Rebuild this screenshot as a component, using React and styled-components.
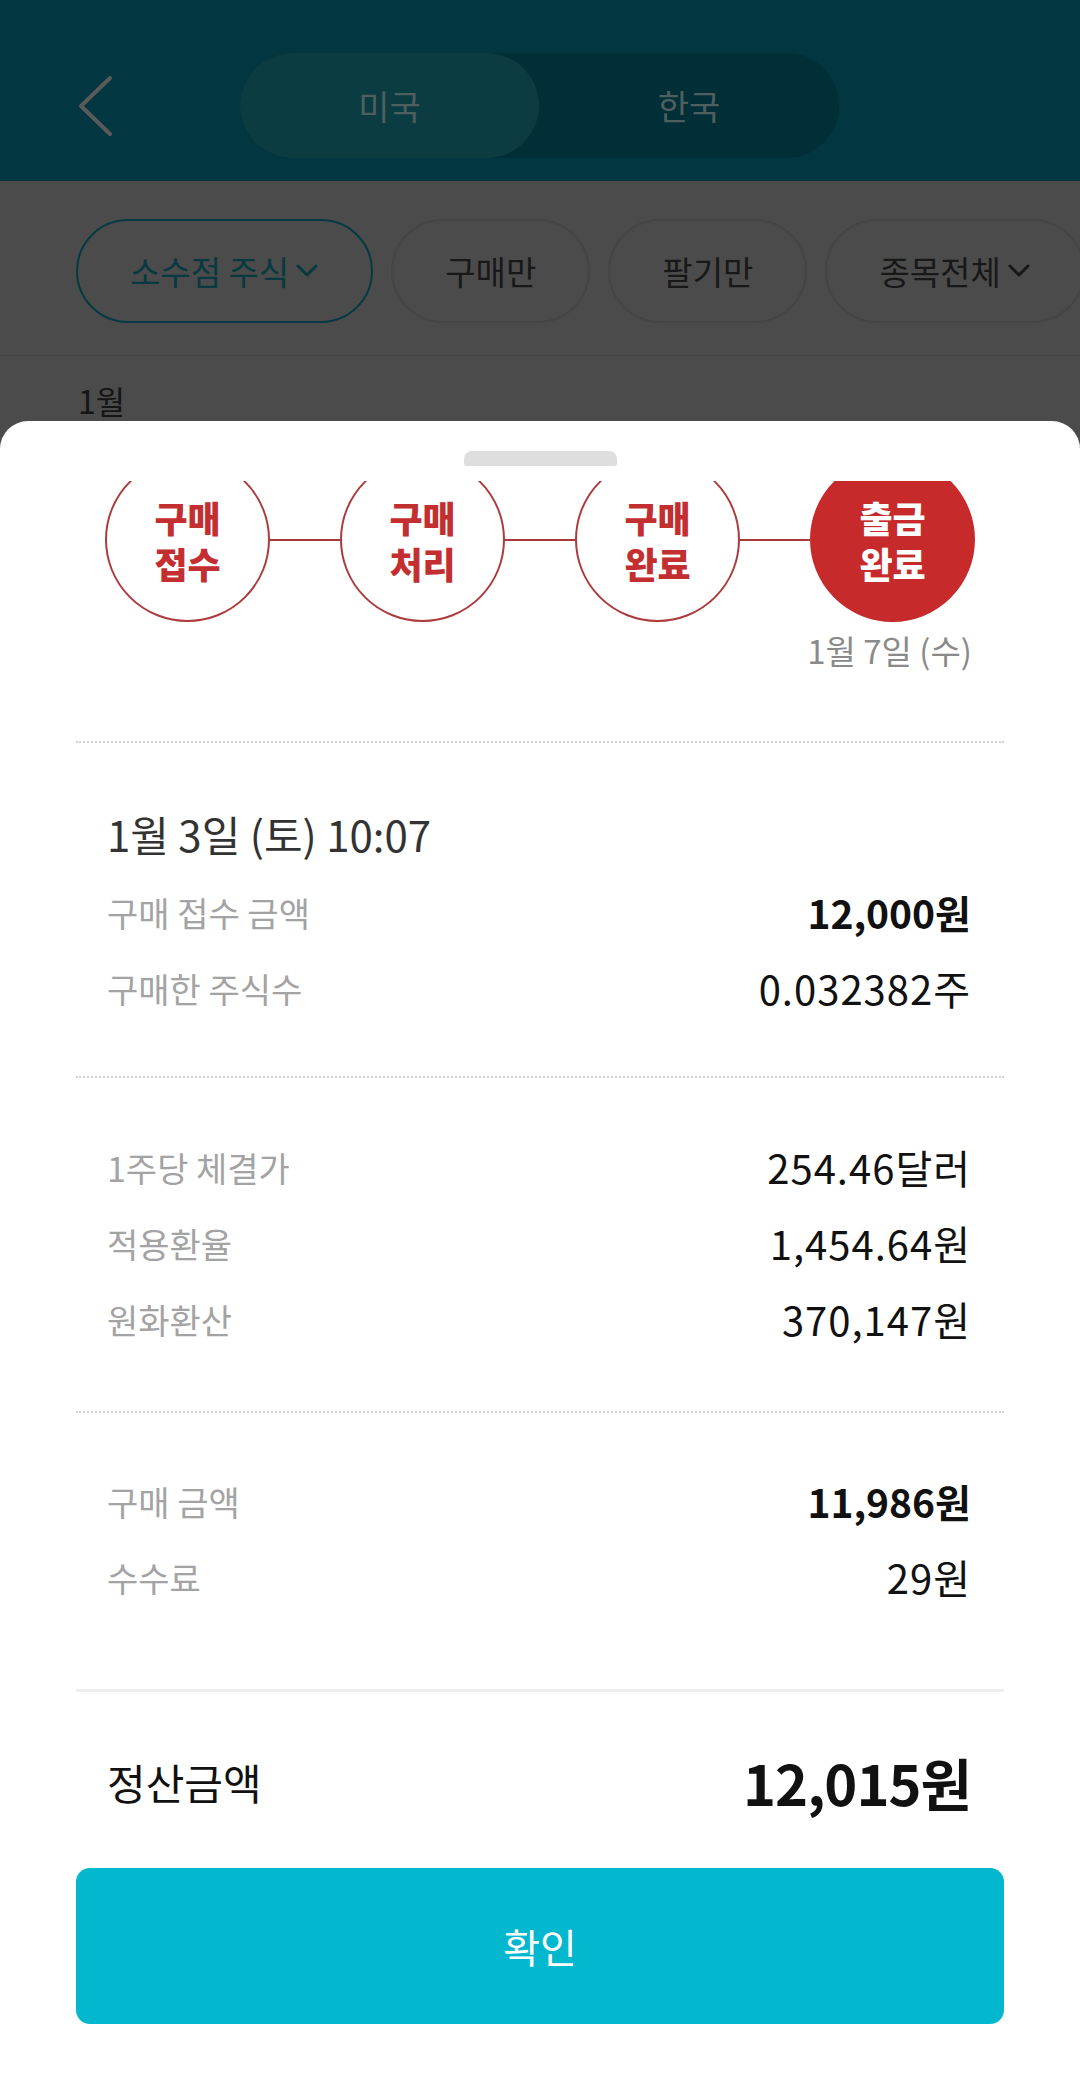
import React from 'react'
import styled, { createGlobalStyle } from 'styled-components'

const GlobalStyle = createGlobalStyle`
  html, body {
    margin: 0;
    padding: 0;
  }
  body {
    font-family: 'Noto Sans CJK KR', 'Noto Sans', sans-serif;
    background: #ffffff;
  }
  * {
    box-sizing: border-box;
  }
`

const steps = [
  { id: 1, lines: ['구매', '접수'] },
  { id: 2, lines: ['구매', '처리'] },
  { id: 3, lines: ['구매', '완료'] },
  { id: 4, lines: ['출금', '완료'], done: true },
]

const sections = [
  {
    title: '1월 3일 (토) 10:07',
    pt: 65,
    pb: 50,
    rows: [
      { label: '구매 접수 금액', value: '12,000원', bold: true },
      { label: '구매한 주식수', value: '0.032382주' },
    ],
  },
  {
    pt: 51,
    pb: 54,
    rows: [
      { label: '1주당 체결가', value: '254.46달러' },
      { label: '적용환율', value: '1,454.64원' },
      { label: '원화환산', value: '370,147원' },
    ],
  },
  {
    pt: 50,
    pb: 74,
    last: true,
    rows: [
      { label: '구매 금액', value: '11,986원', bold: true },
      { label: '수수료', value: '29원' },
    ],
  },
]

const chips = [
  { id: 'frac', text: '소수점 주식', caret: true, active: true },
  { id: 'buy', text: '구매만' },
  { id: 'sell', text: '팔기만' },
  { id: 'all', text: '종목전체', caret: true },
]

const Caret = () => (
  <svg width='24' height='16' viewBox='0 0 24 16'>
    <path d='M3 3 L12 12 L21 3' fill='none' stroke='currentColor' strokeWidth='3' strokeLinecap='round' strokeLinejoin='round' />
  </svg>
)

const App = () => {
  return (
    <Screen>
      <GlobalStyle />
      <Header>
        <BackButton>
          <svg width='40' height='64' viewBox='0 0 40 64'>
            <path d='M34 4 L5 32 L34 60' fill='none' stroke='#5a5a5a' strokeWidth='4' strokeLinecap='round' strokeLinejoin='round' />
          </svg>
        </BackButton>
        <Toggle>
          <ToggleItem $active>미국</ToggleItem>
          <ToggleItem>한국</ToggleItem>
        </Toggle>
      </Header>
      <FilterBar>
        {chips.map((chip) => (
          <Chip key={chip.id} $active={chip.active}>
            {chip.text}
            {chip.caret && <Caret />}
          </Chip>
        ))}
      </FilterBar>
      <Month>1월</Month>

      <Sheet>
        <Handle />
        <Body>
          <StepViewport>
            <StepsRow>
              {steps.map((step, i) => (
                <React.Fragment key={step.id}>
                  {i > 0 && <Connector />}
                  <StepCircle $done={step.done}>
                    {step.lines.join('\n')}
                  </StepCircle>
                </React.Fragment>
              ))}
            </StepsRow>
          </StepViewport>
          <StepDate>1월 7일 (수)</StepDate>

          {sections.map((section, i) => (
            <InfoSection key={i} $first={i === 0} $pt={section.pt} $pb={section.pb} $last={section.last}>
              {section.title && <SectionTitle>{section.title}</SectionTitle>}
              {section.rows.map((row) => (
                <Row key={row.label}>
                  <Label>{row.label}</Label>
                  <Value $bold={row.bold}>{row.value}</Value>
                </Row>
              ))}
            </InfoSection>
          ))}

          <TotalRow>
            <TotalLabel>정산금액</TotalLabel>
            <TotalValue>12,015원</TotalValue>
          </TotalRow>
          <ConfirmButton>확인</ConfirmButton>
        </Body>
      </Sheet>
    </Screen>
  )
}

const Screen = styled.div`
  position: relative;
  width: 1080px;
  height: 2098px;
  overflow: hidden;
  background: #4b4b4b;
`

const Header = styled.header`
  height: 181px;
  padding-top: 30px;
  padding-left: 76px;
  display: flex;
  align-items: center;
  background: #023640;
`

const BackButton = styled.div`
  width: 40px;
  height: 64px;
  display: flex;
`

const Toggle = styled.div`
  margin-left: 124px;
  width: 599px;
  height: 105px;
  border-radius: 53px;
  background: #012f37;
  display: grid;
  grid-template-columns: 299px 1fr;
`

const ToggleItem = styled.div`
  display: flex;
  align-items: center;
  justify-content: center;
  border-radius: 53px;
  font-size: 34px;
  color: #4f5f60;
  background: ${(p) => (p.$active ? '#0a3c42' : 'transparent')};
`

const FilterBar = styled.div`
  display: flex;
  gap: 18px;
  padding: 38px 0 32px 76px;
  border-bottom: 1px solid #444444;
  background: #4b4b4b;
`

const Chip = styled.div`
  flex-shrink: 0;
  height: 104px;
  padding: 0 52px;
  border-radius: 52px;
  display: flex;
  align-items: center;
  gap: 6px;
  font-size: 33px;
  color: ${(p) => (p.$active ? '#063a40' : '#181818')};
  border: 2px solid ${(p) => (p.$active ? '#053a42' : '#454545')};
`

const Month = styled.div`
  padding: 24px 0 0 78px;
  font-size: 32px;
  line-height: 40px;
  color: #151515;
`

const Sheet = styled.section`
  position: absolute;
  top: 421px;
  left: 0;
  right: 0;
  bottom: 0;
  background: #ffffff;
  border-radius: 28px 28px 0 0;
  display: flex;
  flex-direction: column;
`

const Handle = styled.div`
  margin: 30px auto 0;
  width: 153px;
  height: 15px;
  border-radius: 8px 8px 2px 2px;
  background: #dedede;
`

const Body = styled.div`
  padding: 0 76px;
  display: flex;
  flex-direction: column;
`

const StepViewport = styled.div`
  margin-top: 15px;
  height: 142px;
  overflow: hidden;
`

const StepsRow = styled.div`
  margin: -24px 0 0 29px;
  display: flex;
  align-items: center;
`

const StepCircle = styled.div`
  flex-shrink: 0;
  width: 165px;
  height: 165px;
  border-radius: 50%;
  border: 2px solid ${(p) => (p.$done ? '#c62a2a' : '#ad3a3c')};
  background: ${(p) => (p.$done ? '#c62a2a' : '#ffffff')};
  color: ${(p) => (p.$done ? '#ffffff' : '#c32f30')};
  display: flex;
  align-items: center;
  justify-content: center;
  text-align: center;
  white-space: pre-line;
  font-size: 36px;
  font-weight: 900;
  line-height: 46px;
`

const Connector = styled.div`
  width: 70px;
  height: 2px;
  background: #a8393b;
`

const StepDate = styled.div`
  margin: 7px 32px 0 0;
  text-align: right;
  font-size: 33px;
  line-height: 40px;
  color: #8a8a8a;
`

const InfoSection = styled.div`
  margin-top: ${(p) => (p.$first ? 71 : 0)}px;
  padding: ${(p) => p.$pt}px 33px ${(p) => p.$pb}px 31px;
  border-top: 2px dotted #d2d2d2;
  border-bottom: ${(p) => (p.$last ? '3px solid #eeeeee' : 'none')};
`

const SectionTitle = styled.div`
  height: 52px;
  margin-bottom: 14px;
  font-size: 42px;
  line-height: 52px;
  color: #333333;
`

const Row = styled.div`
  height: 76px;
  display: flex;
  align-items: center;
  justify-content: space-between;
`

const Label = styled.span`
  font-size: 34px;
  color: #a3a3a3;
`

const Value = styled.span`
  font-size: ${(p) => (p.$bold ? 39 : 40)}px;
  font-weight: ${(p) => (p.$bold ? 700 : 400)};
  letter-spacing: ${(p) => (p.$bold ? 0 : 1)}px;
  color: #111111;
`

const TotalRow = styled.div`
  margin-top: 44px;
  height: 90px;
  padding: 0 33px 0 31px;
  display: flex;
  align-items: center;
  justify-content: space-between;
`

const TotalLabel = styled.span`
  font-size: 42px;
  font-weight: 400;
  color: #111111;
`

const TotalValue = styled.span`
  font-size: 56px;
  font-weight: 700;
  letter-spacing: -1px;
  color: #111111;
`

const ConfirmButton = styled.button`
  margin-top: 42px;
  width: 100%;
  height: 156px;
  border: none;
  border-radius: 14px;
  background: #03b8ce;
  color: #ffffff;
  font-family: inherit;
  font-size: 40px;
  cursor: pointer;
`

export default App
